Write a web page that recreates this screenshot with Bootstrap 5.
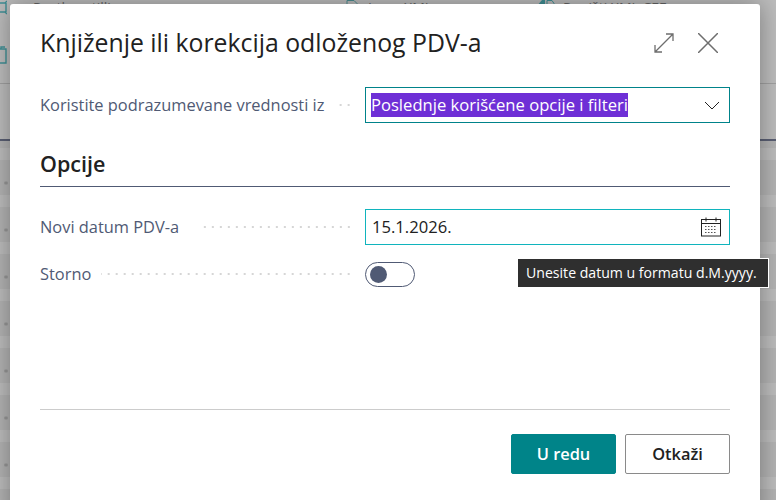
<!DOCTYPE html>
<html lang="en">
<head>
    <meta charset="UTF-8">
    <meta name="viewport" content="width=device-width, initial-scale=1.0">
    <title>Knjiženje ili korekcija odloženog PDV-a</title>
    <link rel="stylesheet" href="https://cdn.jsdelivr.net/npm/bootstrap@5.3.0/dist/css/bootstrap.min.css">
    <script src="https://cdn.jsdelivr.net/npm/bootstrap@5.3.0/dist/js/bootstrap.bundle.min.js"></script>
    <style>
        html, body { height: 500px; overflow: hidden; }
        body { background: #bcbcbc; font-family: "Open Sans", "Liberation Sans", sans-serif; color: #212121; position: relative; }
        .bc-topbar { height: 84px; border-bottom: 1px solid #a0a0a0; color: #666; font-size: 14px; line-height: 15px; white-space: nowrap; overflow: hidden; }
        .bc-rail { width: 7px; gap: 31px; overflow: hidden; }
        .bc-tool { width: 313px; margin-left: 26px; }
        .bc-tool-wide { width: 169px; margin-left: 10px; }
        .bc-tool-last { margin-left: 8px; }
        .bc-band { height: 55px; border-bottom: 2px solid #5a5f73; box-sizing: content-box; }
        .bc-rows { height: 359px; background:
            radial-gradient(circle, #969696 1.5px, transparent 2px) 0 18.5px / 12px 47px repeat-y,
            linear-gradient(180deg, #bcbcbc 0 12px, #b3b3b3 12px 47px) 0 7px / 100% 47px repeat; }
        .bc-dialog { position: absolute; left: 10px; top: 4px; width: 750px; height: 520px; background: #fff; border-radius: 3px; box-shadow: 0 0 24px rgba(0,0,0,.35); padding: 0 30px; }
        .bc-title { font-size: 24.8px; font-weight: 400; margin: 0; }
        .bc-head { height: 83px; padding-top: 1px; padding-bottom: 7px; padding-right: 12px; }
        .bc-field { height: 36px; }
        .bc-label { width: 325px; color: #505a74; font-size: 16.4px; overflow: hidden; }
        .bc-dots { flex: 1; height: 4px; margin: 0 12px 0 10px; background: radial-gradient(circle, #d6d6d6 1px, transparent 1.3px) right center / 8px 4px repeat-x; }
        .bc-dots-short { margin-left: 20px; }
        .bc-input { width: 365px; height: 36px; border: 1px solid #00838a; padding: 0 5px; font-size: 16.6px; }
        .bc-input.is-focused { border-color: #10b4bd; padding: 0 6px; }
        .bc-sel { background: #6e2fd6; color: #fff; }
        .bc-section { font-size: 21.5px; font-weight: 600; border-bottom: 1px solid #505a74; height: 48px; margin-top: 16px; margin-bottom: 22px; padding-top: 4px; }
        .bc-cal { margin-right: 2px; }
        .bc-toggle { width: 50px; height: 25px; border: 1px solid #505a74; border-radius: 13px; padding: 3px 4px; }
        .bc-knob { width: 17px; height: 17px; border-radius: 50%; background: #505a74; }
        .bc-tip { position: absolute; left: 517px; top: 258px; width: 252px; height: 30px; background: #2f2f2f; border: 1px solid #fff; color: #fff; font-size: 14.1px; padding: 0 8px; white-space: nowrap; }
        .bc-rule { position: absolute; left: 30px; right: 30px; top: 405px; border-top: 1px solid #ccc; }
        .bc-foot { position: absolute; right: 30px; top: 430px; gap: 9px; }
        .bc-btn { width: 105px; height: 40px; font-size: 16.4px; border-radius: 2px; padding: 0; font-weight: 600; }
        .bc-ok { background: #008489; color: #fff; border: 1px solid #008489; }
        .bc-ok:hover { background: #00767a; color: #fff; border-color: #00767a; }
        .bc-cancel { background: #fff; color: #212121; border: 1px solid #8a8a8a; }
        .bc-storno { margin-top: 17px; }
    </style>
</head>
<body>
<div class="bc-topbar d-flex">
    <div class="bc-rail d-flex flex-column">
        <svg class="flex-shrink-0" width="7" height="15" viewBox="0 0 7 15" fill="none" stroke="#3f8f95" stroke-width="1.4"><path d="M0 3h5l2-2M0 12h5l2 2M6 3v9"/></svg>
        <svg class="flex-shrink-0" width="7" height="18" viewBox="0 0 7 18" fill="none" stroke="#3f8f95" stroke-width="1.4"><path d="M0 3h6v14H0M1 3V1h4"/></svg>
    </div>
    <span class="bc-tool">Postlna stilli</span>
    <svg class="flex-shrink-0" width="12" height="10" viewBox="0 0 12 10" fill="none" stroke="#4c8c90"><path d="M1 10V.5h7l3 3V10"/></svg>
    <span class="bc-tool-wide">Izvoz XML</span>
    <svg class="flex-shrink-0" width="18" height="10" viewBox="0 0 18 10" fill="#3f8f95"><path d="M0 6 5 0h3v6z"/><path d="M10 .5h5l2 3V8h-7z" fill="none" stroke="#3f8f95"/></svg>
    <span class="bc-tool-last">Poništi XML CEF</span>
</div>
<div class="bc-band"></div>
<div class="bc-rows"></div>
<div class="bc-dialog">
    <div class="bc-head d-flex align-items-center justify-content-between">
        <h1 class="bc-title">Knjiženje ili korekcija odloženog PDV-a</h1>
        <div class="d-flex align-items-center gap-4">
            <svg width="20" height="20" viewBox="0 0 20 20" fill="none" stroke="#6e6e6e" stroke-width="1.3"><path d="M1 19 19 1M12 1h7v7M1 12v7h7"/></svg>
            <svg width="20" height="20" viewBox="0 0 20 20" fill="none" stroke="#6e6e6e" stroke-width="1.5"><path d="M0 0 20 20M20 0 0 20"/></svg>
        </div>
    </div>
    <div class="bc-field d-flex align-items-center">
        <div class="d-flex align-items-center bc-label"><span class="text-nowrap">Koristite podrazumevane vrednosti iz</span><span class="bc-dots"></span></div>
        <div class="bc-input d-flex align-items-center justify-content-between">
            <span class="bc-sel">Poslednje korišćene opcije i filteri</span>
            <svg width="16" height="9" viewBox="0 0 16 9" fill="none" stroke="#222" class="me-1"><path d="M1 1 8 8 15 1"/></svg>
        </div>
    </div>
    <div class="bc-section d-flex align-items-center">Opcije</div>
    <div class="bc-field d-flex align-items-center">
        <div class="d-flex align-items-center bc-label"><span class="text-nowrap">Novi datum PDV-a</span><span class="bc-dots bc-dots-short"></span></div>
        <div class="bc-input is-focused d-flex align-items-center justify-content-between">
            <span>15.1.2026.</span>
            <svg width="20" height="20" viewBox="0 0 20 20" fill="none" stroke="#222" class="bc-cal"><rect x=".5" y="2.5" width="19" height="16.5"/><path d="M.5 6.5h19M5 .5v4M15 .5v4"/><path d="M4 9.5h12M4 12.5h12M4 15.5h12" stroke-dasharray="1.5 1.5" stroke="#555"/></svg>
        </div>
    </div>
    <div class="d-flex align-items-center bc-storno">
        <div class="d-flex align-items-center bc-label"><span class="text-nowrap">Storno</span><span class="bc-dots"></span></div>
        <div class="bc-toggle"><div class="bc-knob"></div></div>
    </div>
    <div class="bc-rule"></div>
    <div class="bc-foot d-flex">
        <button class="btn bc-btn bc-ok">U redu</button>
        <button class="btn bc-btn bc-cancel">Otkaži</button>
    </div>
</div>
<div class="bc-tip d-flex align-items-center">Unesite datum u formatu d.M.yyyy.</div>
</body>
</html>
